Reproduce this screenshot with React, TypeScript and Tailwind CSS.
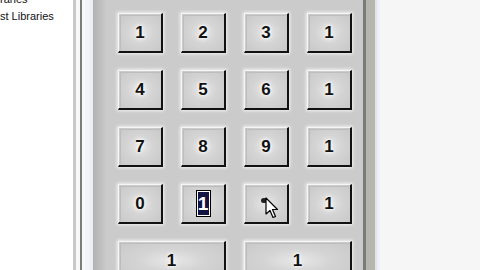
import type { ReactNode } from 'react';

function Key({ children, wide = false }: { children?: ReactNode; wide?: boolean }) {
  return (
    <div
      className={`relative flex h-[40px] items-center justify-center border-t border-l border-t-[#f6f6f6] border-l-[#f6f6f6] border-r-2 border-b-2 border-r-[#111] border-b-[#111] bg-[radial-gradient(ellipse_at_center,#e8e8e8_0%,#d4d4d4_45%,#c8c8c8_100%)] shadow-[0_0_3px_1px_rgba(255,255,255,0.75)] ${wide ? 'col-span-2' : ''}`}
    >
      <div className="pointer-events-none absolute inset-[1px] border-t border-l border-[#bdbdbd] border-r-0 border-b-0" />
      {children}
    </div>
  );
}

function Digit({ value }: { value: string }) {
  return (
    <span className="text-[17px] font-bold leading-none text-[#111] [text-shadow:0_0_3px_#fff,0_0_5px_#fff]">
      {value}
    </span>
  );
}

function Cursor() {
  return (
    <svg className="absolute left-[20px] top-[12px]" width="14" height="22" viewBox="0 0 14 22">
      <path
        d="M1 1 L1 17 L5 13.5 L8 20.5 L10.5 19.5 L7.5 12.5 L12.5 12.5 Z"
        fill="#fff"
        stroke="#000"
        strokeWidth="1.2"
        strokeLinejoin="round"
      />
    </svg>
  );
}

export default function App() {
  const rows = [
    ['1', '2', '3', '1'],
    ['4', '5', '6', '1'],
    ['7', '8', '9', '1'],
  ];

  return (
    <div className="flex h-[270px] w-[480px] overflow-hidden bg-white font-['Liberation_Sans',Arial,sans-serif]">
      {/* project list */}
      <div className="w-[73px] shrink-0 bg-white text-[11px] leading-[17px] text-[#111]">
        <div className="mt-[-9px] whitespace-nowrap">raries</div>
        <div className="whitespace-nowrap">st Libraries</div>
      </div>

      {/* splitter */}
      <div className="w-[3px] shrink-0 bg-[#c8c8c8]" />
      <div className="w-[4px] shrink-0 bg-[#f8f8f8]" />
      <div className="w-[2px] shrink-0 bg-[#7c7c7c]" />
      <div className="w-[11px] shrink-0 bg-gradient-to-r from-[#fafafa] to-[#ececf6]" />

      {/* keypad panel */}
      <div className="flex w-[270px] shrink-0 bg-[#cbcbcb]">
        <div className="w-[14px] shrink-0 bg-gradient-to-r from-[#b2b2b2] to-[#cbcbcb]" />
        <div className="grid flex-1 grid-cols-[repeat(4,45px)] content-start gap-x-[18px] gap-y-[17px] pl-[11px] pt-[13px]">
          {rows.map((row, r) =>
            row.map((d, c) => (
              <Key key={`${r}-${c}`}>
                <Digit value={d} />
              </Key>
            ))
          )}
          <Key>
            <Digit value="0" />
          </Key>
          <Key>
            <span className="flex h-[27px] w-[15px] items-center justify-center border border-black bg-white p-[1px]">
              <span className="flex h-full w-full items-center justify-center bg-[#141444] text-[19px] font-bold leading-none text-white">
                1
              </span>
            </span>
          </Key>
          <Key>
            <span className="absolute left-[16px] top-[13px] h-[5px] w-[6px] rounded-full bg-[#222]" />
            <Cursor />
          </Key>
          <Key>
            <Digit value="1" />
          </Key>
          <Key wide>
            <Digit value="1" />
          </Key>
          <Key wide>
            <Digit value="1" />
          </Key>
        </div>
      </div>

      {/* right border */}
      <div className="w-[3px] shrink-0 bg-[#7a7a7a]" />
      <div className="w-[9px] shrink-0 bg-[#b6b6ae]" />
      <div className="w-[2px] shrink-0 bg-[#e2e2e2]" />
      <div className="w-[3px] shrink-0 bg-[#eeeef6]" />
      <div className="flex-1 bg-[#f6f6f6]" />
    </div>
  );
}
